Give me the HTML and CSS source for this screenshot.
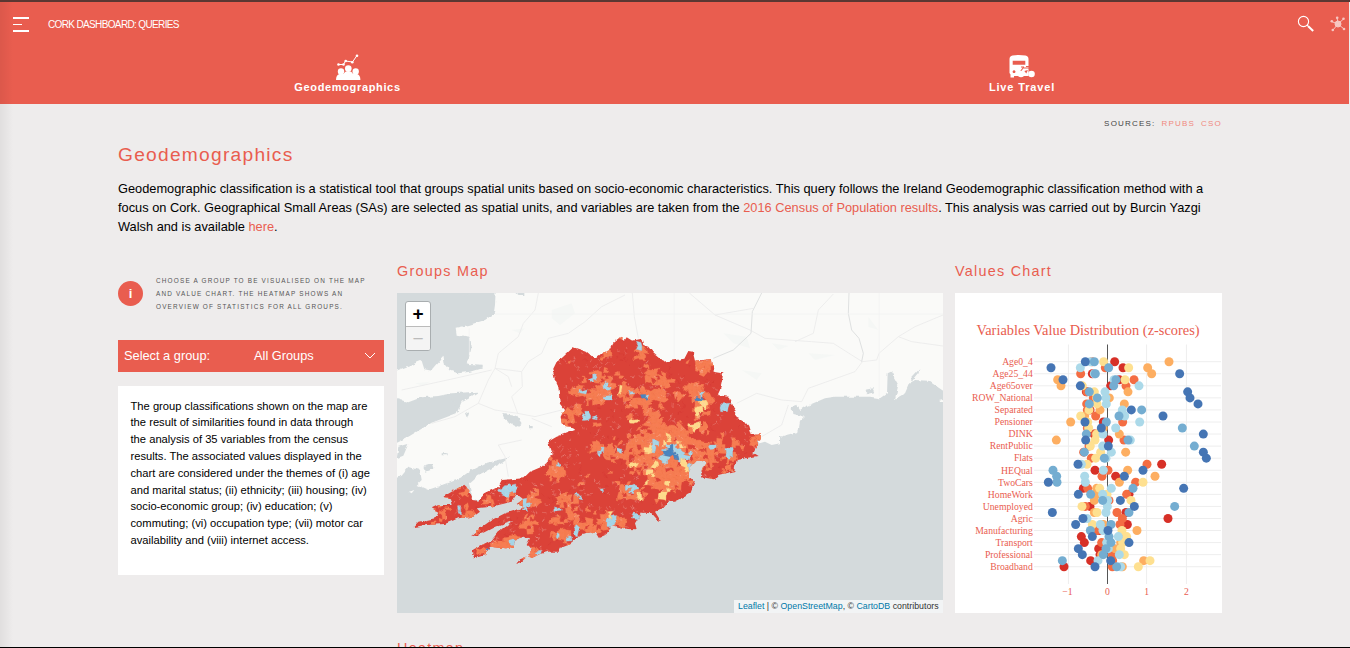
FILE: index.html
```html
<!DOCTYPE html>
<html lang="en">
<head>
<meta charset="utf-8">
<title>Cork Dashboard: Queries</title>
<link rel="stylesheet" href="styles.css">
</head>
<body>
<div class="page">
  <header class="header">
    <div class="topbar">
      <button class="menu-btn" aria-label="Menu"><span></span><span class="short"></span><span></span></button>
      <span class="brand">CORK DASHBOARD: QUERIES</span>
      <div class="tools">
        <svg width="18" height="18" viewBox="0 0 18 18" fill="none" stroke="#fff"><circle cx="6.5" cy="6.5" r="5.1" stroke-width="1.1"/><path d="M10 10l1.6 1.6" stroke-width="1.2"/><path d="M11.2 11.2l5 4.8" stroke-width="2"/></svg>
        <svg class="hub" width="16" height="16" viewBox="0 0 16 16" fill="#fff" stroke="#fff" stroke-width="1"><circle cx="8" cy="8" r="3"/><path d="M8 8L7 1.5M8 8l5.500-5M8 8l6 5M8 8l-5 6M8 8L1.500 5.500"/><g stroke="none"><circle cx="7.2" cy="1.7" r="1.3"/><circle cx="13.5" cy="2.7" r="1.3"/><circle cx="14" cy="13" r="1.3"/><circle cx="2.8" cy="14" r="1.3"/><circle cx="1.8" cy="5.3" r="1.3"/></g></svg>
      </div>
    </div>
    <nav class="tabs">
      <a class="tab">
        <svg width="26" height="27" viewBox="0 0 26 27" fill="#fff"><path d="M3.5 10.500h5l2-3.500 7 1 4.500-6.500" fill="none" stroke="#fff" stroke-width="1"/><circle cx="3.500" cy="10.500" r="1.300"/><circle cx="8.500" cy="10.500" r="1.300"/><circle cx="10.700" cy="7" r="1.300"/><circle cx="17.300" cy="8.300" r="1.300"/><circle cx="22" cy="1.700" r="1.300"/><circle cx="13.300" cy="14.500" r="3.300"/><circle cx="6" cy="17.500" r="3.200"/><circle cx="20.700" cy="17.500" r="3.200"/><path d="M1 26q0-5 3.500-6h4q1.500-3 4.800-3t4.800 3h4q3.300 1 3.300 6z"/></svg>
        <span>Geodemographics</span>
      </a>
      <a class="tab">
        <svg width="26" height="27" viewBox="0 0 26 27" fill="#fff"><path fill-rule="evenodd" d="M.5 5q0-3 3-3.500 6-1 13 0 3 .5 3 3.500v17H5v1.500H1.500v-3L.500 19zM3.700 6.800v4h12.600v-4zM5 16.300a1.400 1.400 0 1 0 .1 0z"/><path d="M11.500 17.500l2.500-3.500h6l2 3M12 13h3M17 12.500h4" fill="none" stroke="#e95d4f" stroke-width="1.100"/><path d="M15.300 17l2 2.600 1.600-3.600z" fill="#e95d4f"/><circle cx="12" cy="20" r="3.300"/><circle cx="22.500" cy="20" r="3.300"/></svg>
        <span>Live Travel</span>
      </a>
    </nav>
  </header>

  <main class="content">
    <div class="sources"><span>SOURCES:</span><a>RPUBS</a><a>CSO</a></div>
    <h1>Geodemographics</h1>
    <p class="intro">Geodemographic classification is a statistical tool that groups spatial units based on socio-economic characteristics. This query follows the Ireland Geodemographic classification method with a focus on Cork. Geographical Small Areas (SAs) are selected as spatial units, and variables are taken from the <a>2016 Census of Population results</a>. This analysis was carried out by Burcin Yazgi Walsh and is available <a>here</a>.</p>

    <div class="grid">
      <aside class="side">
        <div class="info"><b class="badge">i</b><p>CHOOSE A GROUP TO BE VISUALISED ON THE MAP<br>AND VALUE CHART. THE HEATMAP SHOWS AN<br>OVERVIEW OF STATISTICS FOR ALL GROUPS.</p></div>
        <div class="select"><span class="select-label">Select a group:</span><span>All Groups</span><svg width="12" height="8" viewBox="0 0 12 8" fill="none" stroke="#fff"><path d="M1 1l5 5 5-5"/></svg></div>
        <div class="card">The group classifications shown on the map are<br>the result of similarities found in data through<br>the analysis of 35 variables from the census<br>results. The associated values displayed in the<br>chart are considered under the themes of (i) age<br>and marital status; (ii) ethnicity; (iii) housing; (iv)<br>socio-economic group; (iv) education; (v)<br>commuting; (vi) occupation type; (vii) motor car<br>availability and (viii) internet access.</div>
      </aside>
      <section>
        <h2>Groups Map</h2>
        <div class="map">
          <svg width="546" height="320" viewBox="6 9 1638 960">
            <defs>
              <filter id="rough" x="0" y="0" width="1650" height="980" filterUnits="userSpaceOnUse"><feTurbulence type="fractalNoise" baseFrequency=".05" numOctaves="3" seed="4"/><feDisplacementMap in="SourceGraphic" scale="12" xChannelSelector="R" yChannelSelector="G"/></filter>
              <clipPath id="county"><path d="M473 240L485 215 500 205 535 172 575 185 600 207 620 190 645 180 655 160 680 140 690 150 695 142 712 152 740 146 745 165 760 170 775 190 805 215 868 206 880 183 893 185 900 212 950 207 956 245 985 250 980 275 975 300 968 315 1002 320 1010 345 1024 365 1022 378 1048 393 1060 408 1067 432 1097 430 1098 442 1085 470 1075 490 1088 498 1050 505 1025 510 1018 543 970 555 960 568 918 562 920 540 935 520 925 513 905 512 888 530 880 555 900 580 890 605 870 620 840 635 820 635 800 655 780 665 797 692 790 692 770 670 740 668 720 700 725 718 695 717 650 705 635 735 612 745 600 725 570 730 545 745 520 765 495 775 490 785 460 785 435 792 412 803 400 800 412 780 395 765 405 745 385 740 360 752 355 770 330 775 285 770 270 795 238 805 228 782 260 765 290 750 310 725 355 690 300 710 265 728 225 742 255 715 290 690 330 670 390 652 365 642 385 628 365 612 350 635 290 650 245 655 255 665 235 680 190 685 150 702 95 705 55 712 70 695 120 685 130 665 110 655 130 645 170 645 165 625 145 620 170 605 205 585 222 600 235 630 250 632 270 610 310 590 320 570 385 565 405 545 440 530 460 510 470 490 459 455 485 440 540 420 535 412 510 408 500 400 497 380 507 360 495 345 490 290 480 270ZM363 822L375 808 395 800 380 815Z"/></clipPath>
            </defs>
            <rect width="1650" height="980" fill="#d4dadc"/>
            <g filter="url(#rough)">
              <path fill="#fafaf8" d="M303 -20L300 45 296 72 270 90 222 105 182 113 185 134 225 140 230 170 222 205 215 220 262 234 225 245 190 250 165 242 150 225 145 195 138 210 110 242 88 238 80 212 40 228 -10 248V322L40 337 80 322 130 318 170 310 250 305 220 325 200 335 185 370 110 398 70 422 40 440 -10 465V565L15 560 40 530 75 540 80 570 65 585 100 600 130 590 190 568 230 540 270 520 345 502 320 520 250 555 222 580 235 632 270 620 400 600 700 600 1000 450 1085 462 1110 455 1130 465 1155 460 1155 440 1210 425 1215 395 1230 380 1192 372 1190 352 1205 345 1215 360 1230 350 1290 325 1320 320 1380 320 1425 320 1455 325 1476 310 1478 250 1488 245 1510 285 1500 327 1530 310 1543 280 1560 270 1600 272 1670 320V-20Z"/>
              <g fill="#d4dadc"><path d="M190 -10H260L230 10 205 20ZM325 372L365 378 380 400 365 410 335 395ZM402 408h14v7h-14zM210 370l14-8-8 22zM10 470l30-8-15 35-20 8zM140 490h18v6h-18zM85 530l25-8 5 15-22 8zM1408 300l25-5 5 12-18 4zM1545 265l28-30-2 12-20 24zM360 5h28v10h-14zM165 315l22 28-10 2zM225 222l38 2v12l-30 2zM900 582l10 6-14 4z"/></g>
              <path fill="#fafaf8" d="M42 605l16-5-8 10zM1632 330l12-3v8z"/>
            </g>
            <g fill="#f5f7f5"><path d="M470 60l60-20 10 30-45 35-25-20zM985 130l70 10 10 35-50-15zM1040 240l60 10-15 20zM1240 190l80 5-60 15zM1420 80l30 40-30-10zM1130 160l50 8-30 12zM350 120l40-5-15 15zM60 280l45-5-20 13z"/></g>
            <path fill="none" stroke="#eaebea" stroke-width="2.500" d="M430 9L420 60 385 100 370 140 310 190 300 235 380 245 382 290 350 320 368 370 420 380 500 360M380 245L400 215 440 190 460 145 520 130 570 95 620 50 690 15M300 235L340 260 350 290M300 235L280 270 250 340 300 360 368 370M250 340L180 380 110 400M410 385L470 410M380 450L310 465 330 500 340 560M712 9L718 80 730 145M883 9L960 75 1065 120 1110 145 1250 155 1315 160 1370 195 1402 215M960 75L1075 55M1200 155L1255 130 1270 60 1315 12M1025 340L1085 310 1160 330 1220 335 1240 295 1380 245 1402 215 1445 210 1452 190 1510 140 1560 110 1644 75M1510 140L1550 155 1644 168M1180 345L1160 405 1100 440M20 300L180 265 290 240"/>
            <path fill="none" stroke="#dfe1e1" stroke-width="3" d="M1100 9L1072 65 1068 130 1015 180 955 205M1362 9L1360 70 1370 120 1392 145 1405 190 1400 215"/>
            <path stroke="#f2f3f2" stroke-width="2" d="M300 72H1644M223 115V200M838 9V210M1453 9V320"/>
            <g filter="url(#rough)"><g id="areas" clip-path="url(#county)"></g></g>
          </svg>
          <div class="zoom"><span>+</span><span class="off">−</span></div>
          <div class="attribution"><a>Leaflet</a> | © <a>OpenStreetMap</a>, © <a>CartoDB</a> contributors</div>
        </div>
        <h2 class="next">Heatmap</h2>
      </section>
      <section>
        <h2>Values Chart</h2>
        <div class="chart"><svg id="chart" width="267" height="320" viewBox="955 293 267 320"></svg></div>
      </section>
    </div>
  </main>
</div>
<script src="script.js"></script>
</body>
</html>
```
FILE: styles.css
```css
* { box-sizing: border-box; }
body { margin: 0; font-family: "Liberation Sans", Arial, sans-serif; background: #eeecec; color: #000; }
.page { height: 648px; overflow: hidden; position: relative; border-top: 2px solid #5b3732; border-bottom: 1px solid #000; }
.page::before { content: ""; position: absolute; z-index: 2; left: 0; top: 0; bottom: 0; width: 13px; background: linear-gradient(90deg, rgba(0,0,0,.06), transparent); }
.header { height: 102px; margin-right: 1px; background: #e95d4f; color: #fff; }
.topbar { display: flex; align-items: center; height: 44px; padding-left: 13px; }
.menu-btn { display: flex; flex-direction: column; gap: 5px; width: 16px; padding: 0; border: 0; background: none; }
.menu-btn span { height: 2px; width: 16px; background: #fff; }
.menu-btn .short { width: 9px; height: 1px; }
.brand { margin-left: 19px; font-size: 10px; letter-spacing: -.64px; }
.tools { display: flex; align-items: center; gap: 15px; margin-left: auto; margin-right: 3px; }
.hub { opacity: .65; }
.tabs { display: grid; grid-template-columns: 695px 654px; padding-top: 8px; }
.tab { display: flex; flex-direction: column; align-items: center; font-size: 11px; font-weight: 700; letter-spacing: .65px; line-height: 13px; }
.tab:last-child span { letter-spacing: .85px; }
.content { width: 1104px; margin-left: 118px; }
.sources { display: flex; justify-content: flex-end; gap: 6px; padding-top: 14px; font-size: 8px; line-height: 12px; letter-spacing: 1.2px; color: #444; }
.sources a { color: #f08980; }
h1, h2 { margin: 0; color: #e95d4f; font-weight: 400; letter-spacing: 1.25px; }
h1 { margin-top: 13px; font-size: 19.2px; line-height: 24px; }
.intro { margin: 12px 0 0; font-size: 12.8px; line-height: 19.2px; }
.intro a { color: #e95d4f; }
.grid { display: grid; grid-template-columns: 266px 546px 267px; column-gap: 13px; margin-top: 24px; }
.grid > :last-child { width: 267px; margin-left: -1px; }
h2 { font-size: 14.4px; line-height: 20px; }
.next { margin-top: 25px; }
.side { padding-top: 13px; }
.info { display: flex; align-items: center; height: 40px; }
.info p { margin: 0 0 0 13px; white-space: nowrap; font-size: 6.4px; letter-spacing: 1.19px; line-height: 13px; color: #555; }
.badge { flex: none; width: 25px; height: 25px; border-radius: 50%; background: #e95d4f; color: #fff; font-size: 12.8px; line-height: 25px; text-align: center; }
.select { display: flex; align-items: center; height: 32px; margin-top: 26px; padding: 0 8px 0 6px; background: #e95d4f; color: #fff; font-size: 12.8px; }
.select-label { width: 130px; }
.select svg { margin-left: auto; }
.card { height: 189px; margin-top: 14px; padding: 12px 0 0 12.500px; background: #fff; font-size: 11.2px; line-height: 16.8px; white-space: nowrap; }
.map { position: relative; width: 546px; height: 320px; margin-top: 12px; overflow: hidden; }
.map > svg, .chart > svg { display: block; }
.zoom { position: absolute; left: 8px; top: 8px; width: 26px; border: 1px solid #a9aeb0; border-radius: 3px; overflow: hidden; font: 700 19px/24px "Liberation Sans", sans-serif; text-align: center; background: #fff; }
.zoom span { display: block; height: 24px; }
.zoom .off { height: 24px; border-top: 1px solid #bbb; background: #f4f4f4; color: #bbb; font-weight: 400; }
.attribution { position: absolute; right: 0; bottom: 0; width: 209px; height: 13px; padding-left: 4px; background: rgba(255,255,255,.7); font-size: 8.800px; line-height: 12px; white-space: nowrap; color: #333; }
.attribution a { color: #0078a8; }
.chart { height: 320px; margin-top: 12px; background: #fff; }
.chart text { font-family: "Liberation Serif", "Times New Roman", serif; fill: #e95d4f; font-size: 9.700px; }
.chart .chart-title { font-size: 14.4px; }
```
FILE: script.js
```js
const NS = 'http://www.w3.org/2000/svg';
function add(parent, tag, attrs, text) {
  const el = document.createElementNS(NS, tag);
  for (const k in attrs) el.setAttribute(k, attrs[k]);
  if (text) el.textContent = text;
  parent.appendChild(el);
  return el;
}

/* Values chart: one row per variable, one column per group */
const colors = ['#d73027', '#f46d43', '#fdae61', '#fee090', '#abd9e9', '#74add1', '#4575b4'];
const labels = ['Age0_4', 'Age25_44', 'Age65over', 'ROW_National', 'Separated', 'Pensioner', 'DINK', 'RentPublic', 'Flats', 'HEQual', 'TwoCars', 'HomeWork', 'Unemployed', 'Agric', 'Manufacturing', 'Transport', 'Professional', 'Broadband'];
const _ = null;
const rows = [
  [494,426,657,461,421,433,406],[519,466,593,536,391,476,303],[427,392,605,_,433,436,689],
  [508,552,323,525,492,498,339],[482,528,333,397,567,491,391],[409,411,534,433,465,418,713],
  [_,430,478,440,468,442,720],[_,410,523,441,469,418,744],[420,412,450,417,517,575,544],
  [_,437,404,392,524,507,639],[460,518,362,413,569,469,405],[_,412,460,416,497,697,454],
  [432,437,508,440,459,409,760],[476,522,319,435,541,534,407],[_,417,_,421,458,733,475],
  [_,401,527,452,484,403,760],[_,424,_,437,468,463,769],[635,591,_,411,394,_,384],
  [435,474,533,_,460,309,579],[497,456,615,_,404,320,523],[_,557,508,579,406,321,295],
  [400,413,440,449,484,549,701],[537,530,440,471,458,422,385],[_,477,433,543,473,458,511],
  [420,406,_,396,472,674,553],[528,501,433,441,468,537,307],[654,517,_,_,411,_,399],
  [532,510,460,427,451,483,377],[447,440,561,516,459,421,474],[394,_,520,530,505,477,427],
  [403,455,512,518,470,483,537],[446,_,495,512,475,468,385],[450,487,455,523,508,460,397],
  [422,488,581,600,444,337,482],[342,487,517,565,512,500,435]
];
const chart = document.getElementById('chart');
add(chart, 'text', { x: 1088, y: 335, 'text-anchor': 'middle', class: 'chart-title' }, 'Variables Value Distribution (z-scores)');
labels.forEach((label, i) => {
  const y = 361.7 + i * 12.06;
  add(chart, 'path', { d: `M1034 ${y}H1221`, stroke: '#eee' });
  add(chart, 'text', { x: 1032.800, y: y + 3.300, 'text-anchor': 'end' }, label);
});
[[1068.4, '−1'], [1107.5, '0'], [1146.6, '1'], [1186.4, '2']].forEach(([x, t], i) => {
  add(chart, 'path', { d: `M${x} 344.5V584`, stroke: i === 1 ? '#555' : '#eee' });
  add(chart, 'text', { x: x - (i ? 0 : 1), y: 595, 'text-anchor': 'middle' }, t);
});
colors.forEach((fill, c) => rows.forEach((row, r) => {
  if (row[c] !== null) add(chart, 'circle', { cx: 950 + row[c] / 3, cy: 361.7 + r * 6.03, r: 4.5, fill });
}));

/* Small areas: jittered mesh coloured by group clusters [x, y, radius] */
let seed = 17;
const rand = () => (seed = (seed * 16807) % 2147483647) / 2147483647;
const clusters = [
  ['#4a86c0', [[824,485,15],[745,321,6],[278,770,9],[908,322,7],[835,500,8]]],
  ['#a6d6e8', [[730,155,10],[592,265,7],[632,285,9],[635,323,9],[558,303,7],[705,297,8],[745,320,11],[575,372,9],[594,380,8],[608,485,10],[675,478,8],[912,225,7],[910,312,10],[985,350,8],[1092,457,10],[955,470,10],[1000,487,10],[332,597,17],[350,590,11],[318,605,11],[392,640,12],[485,655,10],[545,612,8],[537,717,10],[645,688,12],[705,595,10],[720,675,9],[775,465,11],[350,752,8],[515,745,7],[478,733,8],[430,785,8],[192,655,7],[617,602,6],[485,523,8],[850,497,19],[810,495,15],[830,470,14],[875,490,9],[890,530,12]]],
  ['#fedb8c', [[780,455,9],[815,440,12],[672,295,9],[707,390,9],[752,315,7],[917,347,12],[890,408,12],[905,365,8],[710,522,9],[765,550,10],[775,530,8],[727,615,12],[745,577,7],[820,585,10],[798,615,10],[650,672,8],[855,460,9],[875,525,9],[760,475,8],[860,520,8]]],
  ['#f67d53', [[630,190,17],[733,185,20],[598,255,16],[630,285,28],[610,320,26],[540,300,18],[580,318,18],[508,378,28],[548,360,13],[690,298,26],[765,250,26],[800,270,24],[740,320,32],[785,310,26],[710,345,15],[765,370,17],[775,400,22],[800,430,35],[740,450,35],[700,480,32],[600,470,22],[925,218,28],[850,310,14],[895,300,25],[925,330,25],[905,350,18],[922,410,15],[850,430,28],[885,470,30],[830,470,55],[1085,448,22],[1025,455,16],[955,470,26],[1000,490,18],[920,495,40],[870,510,45],[800,510,50],[720,500,35],[650,490,25],[480,542,26],[340,612,16],[280,630,16],[210,605,12],[215,678,24],[140,670,12],[415,625,23],[400,700,23],[335,758,23],[265,785,17],[300,765,18],[510,630,22],[545,620,14],[525,670,20],[550,705,20],[480,690,18],[500,735,22],[590,705,22],[640,690,28],[680,690,20],[690,600,24],[725,610,20],[790,560,36],[825,570,36],[850,540,38],[470,730,14],[410,790,18],[380,640,17],[1000,530,15],[930,535,12],[700,375,12],[660,240,10],[530,770,12]]]
];
const step = 11;
const vertex = (i, j) => {
  const h = Math.sin(i * 127.1 + j * 311.7) * 43758.5453;
  const k = Math.sin(i * 269.5 + j * 183.3) * 24634.6345;
  return [(40 + i * step + (h - Math.floor(h)) * 9).toFixed(1), (130 + j * step + (k - Math.floor(k)) * 9).toFixed(1)];
};
const paths = {};
for (let i = 0; i < 97; i++) {
  for (let j = 0; j < 64; j++) {
    const x = 46 + i * step + (rand() - .5) * 13;
    const y = 136 + j * step + (rand() - .5) * 13;
    let color = null;
    for (const [c, spots] of clusters) {
      if (spots.some(([a, b, r]) => Math.hypot(x - a, y - b) < r)) { color = c; break; }
    }
    if (color === '#f67d53' && rand() < .1) color = null;
    else if (!color && rand() < .02) color = '#f67d53';
    if (!color) continue;
    const p = [vertex(i, j), vertex(i + 1, j), vertex(i + 1, j + 1), vertex(i, j + 1)];
    paths[color] = (paths[color] || '') + 'M' + p.join('L') + 'Z';
  }
}
const areas = document.getElementById('areas');
add(areas, 'rect', { x: 40, y: 120, width: 1080, height: 720, fill: '#db4239' });
for (const c in paths) add(areas, 'path', { d: paths[c], fill: c, stroke: c, 'stroke-width': 1 });
let dark = '', pale = '';
for (let n = 0; n < 1500; n++) {
  const x = 50 + rand() * 1050, y = 140 + rand() * 680;
  const d = `M${x.toFixed(1)} ${y.toFixed(1)}l${((rand() - .5) * 18).toFixed(1)} ${((rand() - .5) * 18).toFixed(1)}l${((rand() - .5) * 14).toFixed(1)} ${((rand() - .5) * 14).toFixed(1)}`;
  if (n % 3) pale += d; else dark += d;
}
add(areas, 'path', { d: dark, fill: 'none', stroke: '#cf2f2b', 'stroke-width': 2, opacity: .35 });
add(areas, 'path', { d: pale, fill: 'none', stroke: '#fbd9cc', 'stroke-width': 1.800, opacity: .4 });
```
